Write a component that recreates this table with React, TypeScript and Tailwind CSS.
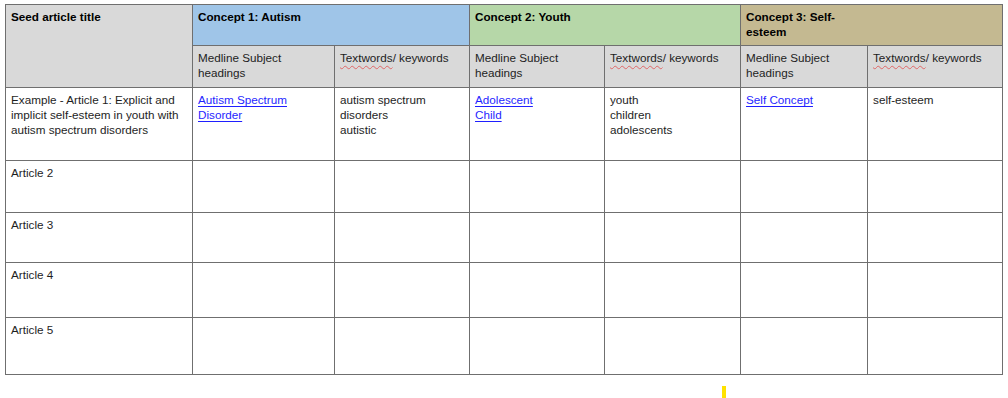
import { Fragment } from 'react'

const concepts = [
  { title: 'Concept 1: Autism', bg: 'bg-[#9fc5e8]' },
  { title: 'Concept 2: Youth', bg: 'bg-[#b6d7a8]' },
  { title: 'Concept 3: Self-esteem', bg: 'bg-[#c4b991]' },
]

const cell = 'border border-[#6f6f6f] px-[5px] pt-[4px] align-top'

const Spell = ({ children }: { children: React.ReactNode }) => (
  <span className="underline decoration-wavy decoration-[#e06666] decoration-1 underline-offset-[3px]">{children}</span>
)

const Link = ({ children }: { children: React.ReactNode }) => (
  <a href="#" className="text-[#1f1fff] underline underline-offset-[2px]">{children}</a>
)

const Lines = ({ items }: { items: string[] }) => (
  <>
    {items.map((t) => (
      <div key={t}>{t}</div>
    ))}
  </>
)

const articles = ['Article 2', 'Article 3', 'Article 4', 'Article 5']
const articleHeights = ['h-[52px]', 'h-[50px]', 'h-[55px]', 'h-[57px]']

export default function App() {
  return (
    <div className="w-[1008px] h-[398px] bg-white pl-[5px] pt-[4px] text-[11.7px] leading-[15px] text-[#1e1e1e]" style={{ fontFamily: '"Liberation Sans", Arial, sans-serif' }}>
      <table className="table-fixed border-collapse w-[997px]">
        <colgroup>
          <col className="w-[187px]" />
          <col className="w-[142px]" />
          <col className="w-[135px]" />
          <col className="w-[135px]" />
          <col className="w-[136px]" />
          <col className="w-[127px]" />
          <col className="w-[135px]" />
        </colgroup>
        <tbody>
          <tr className="h-[41px]">
            <td rowSpan={2} className={`${cell} bg-[#d9d9d9] font-bold text-black`}>Seed article title</td>
            {concepts.map((c) => (
              <td key={c.title} colSpan={2} className={`${cell} ${c.bg} font-bold text-black`}>
                {c.title === 'Concept 3: Self-esteem' ? (
                  <>Concept 3: Self-<br />esteem</>
                ) : (
                  c.title
                )}
              </td>
            ))}
          </tr>
          <tr className="h-[42px]">
            {concepts.map((c) => (
              <Fragment key={c.title}>
                <td className={`${cell} bg-[#d9d9d9]`}>Medline Subject headings</td>
                <td className={`${cell} bg-[#d9d9d9]`}>
                  <Spell>Textwords</Spell>/ keywords
                </td>
              </Fragment>
            ))}
          </tr>
          <tr className="h-[73px]">
            <td className={cell}>Example - Article 1: Explicit and implicit self-esteem in youth with autism spectrum disorders</td>
            <td className={cell}>
              <Link>Autism Spectrum Disorder</Link>
            </td>
            <td className={cell}>
              <Lines items={['autism spectrum', 'disorders', 'autistic']} />
            </td>
            <td className={cell}>
              <div><Link>Adolescent</Link></div>
              <div><Link>Child</Link></div>
            </td>
            <td className={cell}>
              <Lines items={['youth', 'children', 'adolescents']} />
            </td>
            <td className={cell}>
              <Link>Self Concept</Link>
            </td>
            <td className={cell}>self-esteem</td>
          </tr>
          {articles.map((a, i) => (
            <tr key={a} className={articleHeights[i]}>
              <td className={cell}>{a}</td>
              <td className={cell}></td>
              <td className={cell}></td>
              <td className={cell}></td>
              <td className={cell}></td>
              <td className={cell}></td>
              <td className={cell}></td>
            </tr>
          ))}
        </tbody>
      </table>
      <div className="ml-[717px] mt-[11px] w-[4px] h-[12px] bg-[#ffe200]" />
    </div>
  )
}
